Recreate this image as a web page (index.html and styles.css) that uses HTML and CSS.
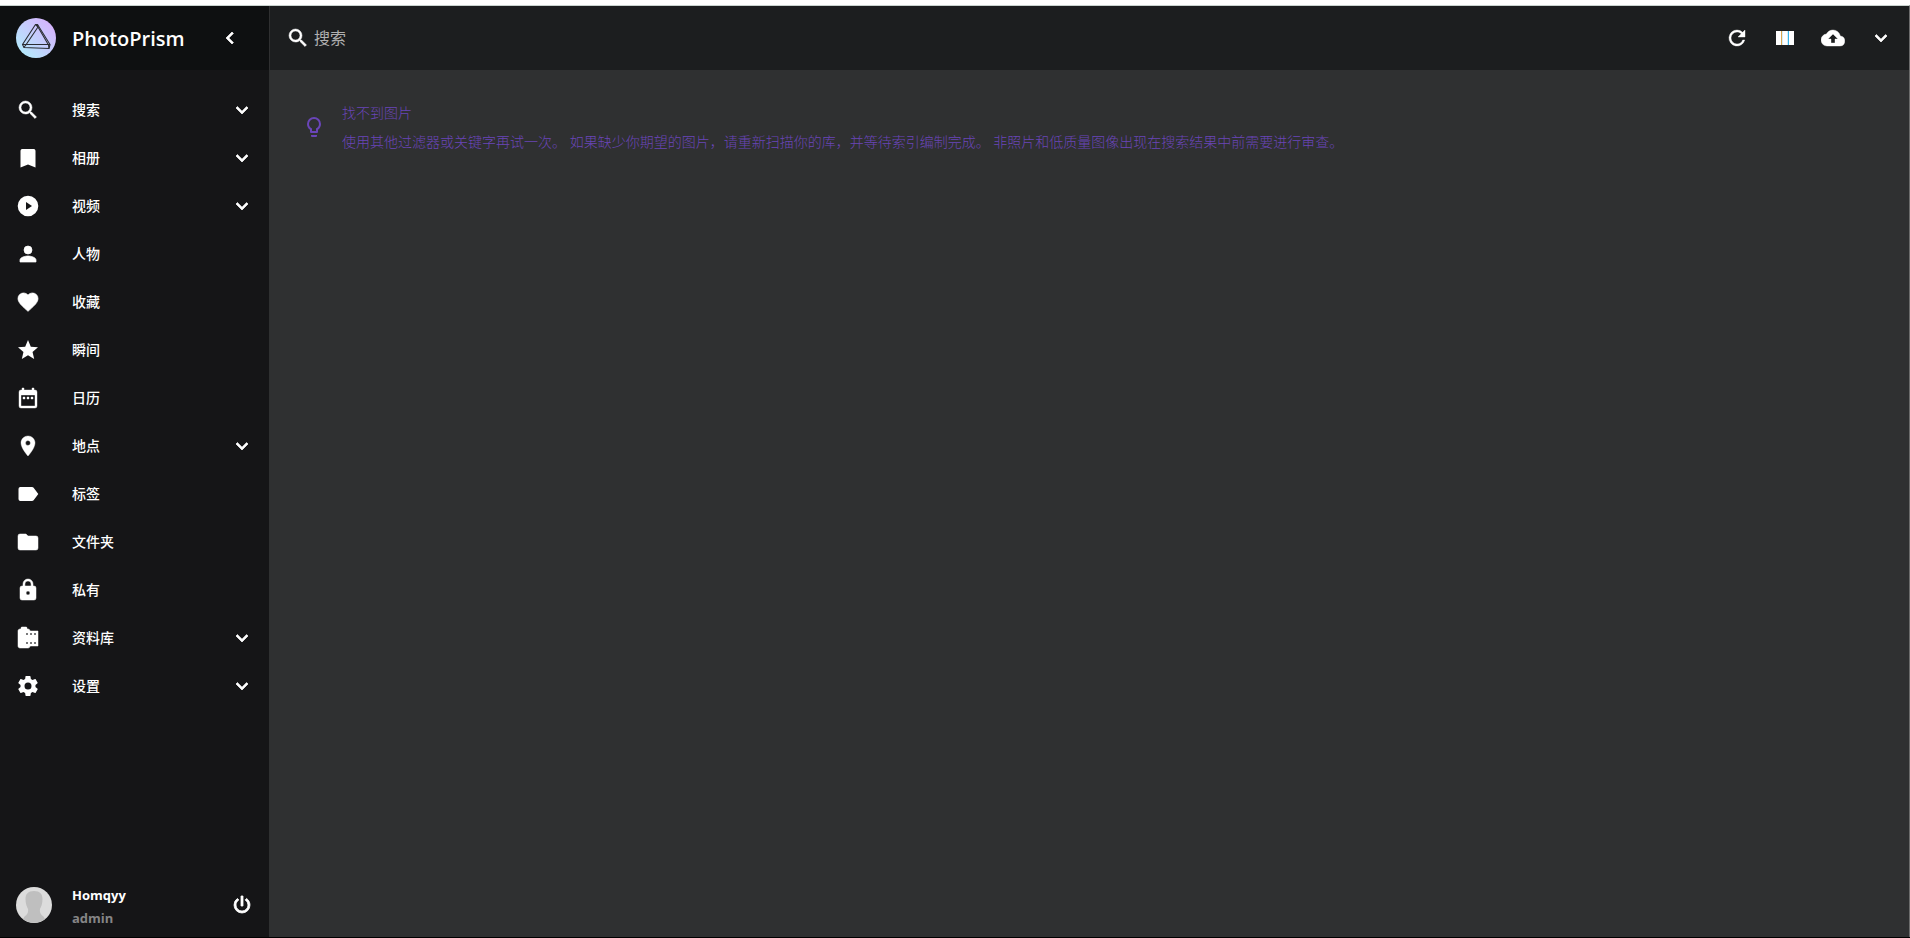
FILE: index.html
```
<!DOCTYPE html>
<html lang="zh-CN">
<head>
    <meta charset="UTF-8">
    <meta name="viewport" content="width=device-width, initial-scale=1.0">
    <title>PhotoPrism</title>
    <link rel="stylesheet" href="styles.css">
</head>
<body>
    <!-- shared icons -->
    <svg class="sprite" aria-hidden="true">
        <symbol id="i-search" viewBox="0 0 24 24"><path stroke="currentColor" stroke-width=".5" d="M15.5 14h-.79l-.28-.27A6.471 6.471 0 0 0 16 9.5 6.5 6.5 0 1 0 9.5 16c1.61 0 3.09-.59 4.23-1.57l.27.28v.79l5 4.99L20.49 19l-4.99-5zm-6 0C7.01 14 5 11.99 5 9.5S7.01 5 9.5 5 14 7.01 14 9.5 11.99 14 9.5 14z"/></symbol>
        <symbol id="i-down" viewBox="0 0 24 24"><path stroke="currentColor" stroke-width=".7" d="M7.41 8.59L12 13.17l4.59-4.58L18 10l-6 6-6-6z"/></symbol>
        <symbol id="i-left" viewBox="0 0 24 24"><path stroke="currentColor" stroke-width=".7" d="M15.41 7.41L14 6l-6 6 6 6 1.41-1.41L10.83 12z"/></symbol>
    </svg>

    <div class="app">
        <aside class="sidebar">
            <div class="brand">
                <a href="#" class="logo" aria-label="PhotoPrism">
                    <svg viewBox="0 0 40 40" width="40" height="40">
                        <defs>
                            <linearGradient id="logoFill" x1="0.1" y1="0.9" x2="0.85" y2="0.15">
                                <stop offset="0" stop-color="#b2ebfc"/>
                                <stop offset="1" stop-color="#d4b5fd"/>
                            </linearGradient>
                        </defs>
                        <circle cx="20" cy="20" r="20" fill="url(#logoFill)"/>
                        <g fill="none" stroke="#2b2d33" stroke-width="1.1" stroke-linejoin="round">
                            <path d="M19.500 6.500L6.500 26.500L8 29.500L33 30.500L34 26.500L21.500 6.500z"/>
                            <path d="M21.500 6.500L22 9L9.500 27.500M6.500 26.500H34M8 29.500L10 26.500M19.500 6.500L22 9L32.500 27L33 30.500"/>
                        </g>
                    </svg>
                </a>
                <h1>PhotoPrism</h1>
                <button type="button" class="icon-btn" aria-label="收起"><svg class="icon"><use href="#i-left"/></svg></button>
            </div>

            <nav class="menu">
                <a href="#"><svg class="icon"><use href="#i-search"/></svg><span>搜索</span><svg class="icon"><use href="#i-down"/></svg></a>
                <a href="#"><svg class="icon" viewBox="0 0 24 24"><path d="M18 3H6c-.6 0-1.500.9-1.500 2v16.500l7.500-3 7.500 3V5c0-1.100-.9-2-1.500-2z"/></svg><span>相册</span><svg class="icon"><use href="#i-down"/></svg></a>
                <a href="#"><svg class="icon" viewBox="0 0 24 24"><path d="M12 1.700a10.300 10.300 0 1 0 0 20.600 10.300 10.300 0 0 0 0-20.600zm-2 14.300V8l6 4z"/></svg><span>视频</span><svg class="icon"><use href="#i-down"/></svg></a>
                <a href="#"><svg class="icon" viewBox="0 0 24 24"><path stroke="currentColor" stroke-width=".7" d="M12 12a4 4 0 1 0 0-8 4 4 0 0 0 0 8zm0 2c-2.670 0-8 1.340-8 4v2h16v-2c0-2.660-5.330-4-8-4z"/></svg><span>人物</span></a>
                <a href="#"><svg class="icon" viewBox="0 0 24 24"><path stroke="currentColor" stroke-width=".7" d="M12 21.350l-1.450-1.320C5.400 15.360 2 12.280 2 8.500 2 5.420 4.420 3 7.500 3c1.740 0 3.410.81 4.500 2.090C13.090 3.810 14.760 3 16.500 3 19.580 3 22 5.420 22 8.500c0 3.780-3.400 6.860-8.550 11.540z"/></svg><span>收藏</span></a>
                <a href="#"><svg class="icon" viewBox="0 0 24 24"><path d="M12 17.270L18.180 21l-1.640-7.030L22 9.240l-7.190-.61L12 2 9.190 8.630 2 9.240l5.460 4.730L5.820 21z"/></svg><span>瞬间</span></a>
                <a href="#"><svg class="icon" viewBox="0 0 24 24"><path stroke="currentColor" stroke-width=".4" d="M9 11H7v2h2zm4 0h-2v2h2zm4 0h-2v2h2zm2-7h-1V2h-2v2H8V2H6v2H5a2 2 0 0 0-2 2v14a2 2 0 0 0 2 2h14a2 2 0 0 0 2-2V6a2 2 0 0 0-2-2zm0 16H5V9h14z"/></svg><span>日历</span></a>
                <a href="#"><svg class="icon" viewBox="0 0 24 24"><path stroke="currentColor" stroke-width=".4" d="M12 2C8.130 2 5 5.130 5 9c0 5.250 7 13 7 13s7-7.750 7-13c0-3.870-3.130-7-7-7zm0 9.500a2.500 2.500 0 1 1 0-5 2.500 2.500 0 0 1 0 5z"/></svg><span>地点</span><svg class="icon"><use href="#i-down"/></svg></a>
                <a href="#"><svg class="icon" viewBox="0 0 24 24"><path d="M17.630 5.840C17.270 5.330 16.670 5 16 5H4a2 2 0 0 0-1.500 2v10a2 2 0 0 0 1.500 2h12c.67 0 1.270-.33 1.630-.84L22.300 12z"/></svg><span>标签</span></a>
                <a href="#"><svg class="icon" viewBox="0 0 24 24"><path stroke="currentColor" stroke-width=".5" d="M10 4H4a2 2 0 0 0-2 2v12a2 2 0 0 0 2 2h16a2 2 0 0 0 2-2V8a2 2 0 0 0-2-2h-8z"/></svg><span>文件夹</span></a>
                <a href="#"><svg class="icon" viewBox="0 0 24 24"><path stroke="currentColor" stroke-width=".5" d="M18 8h-1V6A5 5 0 0 0 7 6v2H6a2 2 0 0 0-2 2v10a2 2 0 0 0 2 2h12a2 2 0 0 0 2-2V10a2 2 0 0 0-2-2zm-6 9a2 2 0 1 1 0-4 2 2 0 0 1 0 4zm3.100-9H8.900V6a3.100 3.100 0 0 1 6.200 0z"/></svg><span>私有</span></a>
                <a href="#"><svg class="icon" viewBox="0 0 24 24"><path stroke="currentColor" stroke-width=".5" d="M14 5c0-1.100-.9-2-2-2h-1V2c0-.55-.45-1-1-1H6c-.55 0-1 .45-1 1v1H4c-1.100 0-2 .9-2 2v15c0 1.100.9 2 2 2h8c1.100 0 2-.9 2-2h8V5h-8zm-2 13h-2v-2h2v2zm0-9h-2V7h2v2zm4 9h-2v-2h2v2zm0-9h-2V7h2v2zm4 9h-2v-2h2v2zm0-9h-2V7h2v2z"/></svg><span>资料库</span><svg class="icon"><use href="#i-down"/></svg></a>
                <a href="#"><svg class="icon" viewBox="0 0 24 24"><path d="M12 15.500A3.500 3.500 0 1 1 12 8.500a3.500 3.500 0 0 1 0 7m7.430-2.530c.04-.32.07-.64.07-.97s-.03-.66-.07-1l2.110-1.630c.19-.15.24-.42.12-.64l-2-3.460c-.12-.22-.39-.31-.61-.22l-2.490 1c-.52-.39-1.060-.73-1.690-.98l-.37-2.650A.506.506 0 0 0 14 2h-4c-.25 0-.46.18-.5.42l-.37 2.650c-.63.25-1.170.59-1.690.98l-2.490-1c-.22-.09-.49 0-.61.22l-2 3.460c-.13.22-.07.49.12.64L4.570 11c-.04.34-.07.67-.07 1s.03.65.07.97l-2.110 1.660c-.19.15-.25.42-.12.64l2 3.460c.12.22.39.3.61.22l2.490-1.010c.52.4 1.060.74 1.690.99l.37 2.650c.04.24.25.42.5.42h4c.25 0 .46-.18.5-.42l.37-2.650c.63-.26 1.170-.59 1.690-.99l2.490 1.010c.22.08.49 0 .61-.22l2-3.460c.12-.22.07-.49-.12-.64z"/></svg><span>设置</span><svg class="icon"><use href="#i-down"/></svg></a>
            </nav>

            <div class="account">
                <svg class="avatar" viewBox="0 0 36 36">
                    <circle cx="18" cy="18" r="18" fill="#dcdcdc"/>
                    <path d="M18 4c-6 0-8.500 3-8.500 8 0 5 1.500 8 2.500 10 .5 3-.5 5.500-3.500 7.500L7 32a18 18 0 0 0 22 0l-1.500-2.500C24.500 27.500 23.500 25 24 22c1-2 2.500-5 2.500-10 0-5-2.500-8-8.500-8z" fill="#bfbfbf"/>
                </svg>
                <div class="who">
                    <div class="name">Homqyy</div>
                    <div class="role">admin</div>
                </div>
                <button type="button" class="icon-btn" aria-label="登出"><svg class="icon" viewBox="0 0 24 24"><path stroke="currentColor" stroke-width=".8" d="M16.560 5.440l-1.450 1.450A5.969 5.969 0 0 1 18 12a6 6 0 1 1-12 0c0-2.170 1.160-4.060 2.880-5.120L7.440 5.440A7.961 7.961 0 0 0 4 12a8 8 0 1 0 16 0c0-2.720-1.360-5.120-3.440-6.560zM13 3h-2v10h2z"/></svg></button>
            </div>
        </aside>

        <main class="content">
            <form class="toolbar">
                <label for="search" aria-label="搜索"><svg class="icon"><use href="#i-search"/></svg></label>
                <input type="text" id="search" placeholder="搜索">
                <button type="button" class="icon-btn" aria-label="刷新"><svg class="icon" viewBox="0 0 24 24"><path stroke="currentColor" stroke-width=".4" d="M17.650 6.350A7.958 7.958 0 0 0 12 4a8 8 0 1 0 7.730 10h-2.080A5.990 5.990 0 0 1 12 18a6 6 0 1 1 0-12c1.660 0 3.140.69 4.220 1.780L13 11h7V4z"/></svg></button>
                <button type="button" class="icon-btn" aria-label="视图"><svg class="icon" viewBox="0 0 24 24"><path d="M3 5h5v14H3zM10 5h4v14h-4zM16 5h5v14h-5z"/><path class="gap-warm" d="M8 5h1v14H8z"/><path class="gap-pale" d="M9 5h1v14H9zM14 5h1v14h-1z"/><path class="gap-cool" d="M15 5h1v14h-1z"/></svg></button>
                <button type="button" class="icon-btn" aria-label="上传"><svg class="icon" viewBox="0 0 24 24"><path stroke="currentColor" stroke-width=".4" d="M19.350 10.040A7.490 7.490 0 0 0 12 4C9.110 4 6.600 5.640 5.350 8.040A5.994 5.994 0 0 0 0 14a6 6 0 0 0 6 6h13a5 5 0 0 0 .35-9.960zM14 13v4h-4v-4H7l5-5 5 5z"/></svg></button>
                <button type="button" class="icon-btn" aria-label="更多"><svg class="icon"><use href="#i-down"/></svg></button>
            </form>

            <div class="notice">
                <svg class="icon" viewBox="0 0 24 24"><path d="M12 2a7 7 0 0 1 7 7c0 2.380-1.190 4.470-3 5.740V17a1 1 0 0 1-1 1H9a1 1 0 0 1-1-1v-2.260C6.190 13.470 5 11.380 5 9a7 7 0 0 1 7-7M9 21v-1h6v1a1 1 0 0 1-1 1h-4a1 1 0 0 1-1-1m3-17a5 5 0 0 0-5 5c0 2.050 1.230 3.810 3 4.580V16h4v-2.420c1.770-.77 3-2.530 3-4.580a5 5 0 0 0-5-5z"/></svg>
                <div>
                    <h3>找不到图片</h3>
                    <p>使用其他过滤器或关键字再试一次。 如果缺少你期望的图片，请重新扫描你的库，并等待索引编制完成。 非照片和低质量图像出现在搜索结果中前需要进行审查。</p>
                </div>
            </div>
        </main>
    </div>
</body>
</html>
```
FILE: styles.css
```
:root {
    --sidebar: #151517;
    --sidebar-top: #0e1011;
    --toolbar: #1c1e1f;
    --page: #2f3031;
    --accent: #6a45b8;
}

* {
    margin: 0;
    padding: 0;
    box-sizing: border-box;
}

body {
    font-family: "Open Sans", "Noto Sans CJK SC", sans-serif;
    font-size: 14px;
    background-color: var(--page);
    color: #fff;
    min-height: 100vh;
    display: flex;
    border-top: 5px solid #fff;
    border-bottom: 1px solid #000;
}

.sprite {
    display: none;
}

.app {
    flex: 1;
    display: flex;
    border-top: 1px solid #c9d3cf;
    border-right: 1px solid #6c6c6c;
}

.icon {
    display: block;
    flex: none;
    width: 24px;
    height: 24px;
    fill: currentColor;
}

.icon-btn {
    flex: none;
    width: 48px;
    height: 48px;
    display: flex;
    align-items: center;
    justify-content: center;
    background: none;
    border: none;
    color: inherit;
    cursor: pointer;
}

/* Sidebar */
.sidebar {
    flex: none;
    width: 269px;
    display: flex;
    flex-direction: column;
    background-color: var(--sidebar);
}

.brand {
    height: 64px;
    padding: 0 15px 0 16px;
    display: flex;
    align-items: center;
    background-color: var(--sidebar-top);
}

.logo {
    width: 56px;
}

.logo svg {
    display: block;
}

.brand h1 {
    flex: 1;
    padding-top: 2px;
    font-size: 20px;
    font-weight: 600;
    line-height: 32px;
}

.menu {
    flex: 1;
    padding-top: 16px;
}

.menu a {
    height: 48px;
    padding: 0 15px 0 16px;
    display: flex;
    align-items: center;
    color: inherit;
    font-weight: 500;
    text-decoration: none;
}

.menu span {
    flex: 1;
    padding: 0 0 2px 32px;
}

.account {
    height: 64px;
    padding: 0 3px 0 16px;
    display: flex;
    align-items: center;
}

.avatar {
    width: 36px;
    height: 36px;
    margin-right: 20px;
}

.who {
    flex: 1;
    padding-top: 3px;
    font-size: 13px;
    font-weight: 700;
    line-height: 23px;
}

.role {
    color: #858586;
}

/* Content */
.content {
    flex: 1;
    min-width: 0;
}

.toolbar {
    height: 64px;
    padding: 0 4px 0 16px;
    display: flex;
    align-items: center;
    background-color: var(--toolbar);
    border-left: 1px solid #2f3031;
}

.toolbar input {
    flex: 1;
    min-width: 0;
    height: 32px;
    padding-left: 4px;
    font: inherit;
    font-size: 16px;
    color: #fff;
    background: none;
    border: none;
    outline: none;
}

.toolbar input::placeholder {
    color: #b0b0b0;
}

.gap-warm {
    fill: #dba850;
}

.gap-pale {
    fill: #d3eefb;
}

.gap-cool {
    fill: #35b4e8;
}

.notice {
    padding: 28px 33px;
    display: flex;
    align-items: center;
    gap: 16px;
    color: var(--accent);
}

.notice h3,
.notice p {
    font-size: 14px;
    font-weight: 300;
    line-height: 29px;
}
```
